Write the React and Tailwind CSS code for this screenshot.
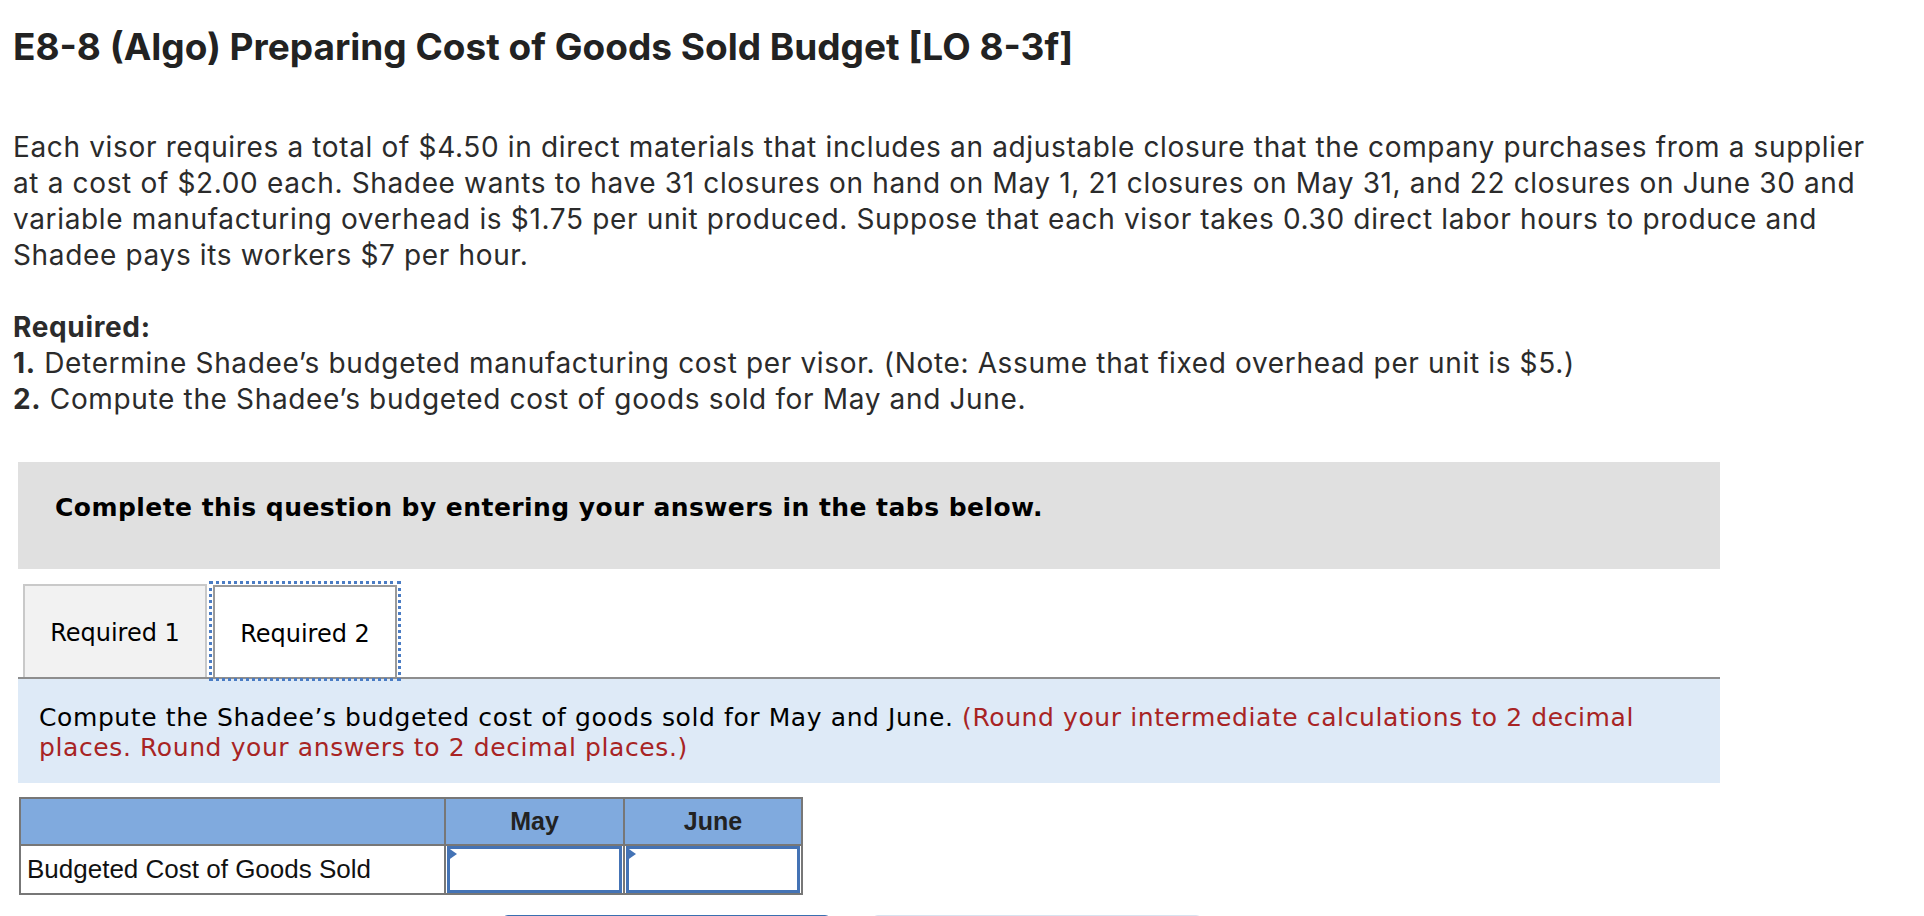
const bodyFont = { fontFamily: 'Inter, Lato, sans-serif' };

const paragraph = [
  'Each visor requires a total of $4.50 in direct materials that includes an adjustable closure that the company purchases from a supplier',
  'at a cost of $2.00 each. Shadee wants to have 31 closures on hand on May 1, 21 closures on May 31, and 22 closures on June 30 and',
  'variable manufacturing overhead is $1.75 per unit produced. Suppose that each visor takes 0.30 direct labor hours to produce and',
  'Shadee pays its workers $7 per hour.',
];

const InputCell = () => (
  <td className="border-2 border-[#777777] p-0 h-[49px]">
    <div className="relative h-full mx-[1px] border-[3px] border-[#4473b5] bg-white">
      <span className="absolute -left-[3px] -top-[2px] w-0 h-0 border-y-[7px] border-y-transparent border-l-[10px] border-l-[#4473b5]" />
    </div>
  </td>
);

const App = () => {
  return (
    <div className="min-h-[916px] bg-white text-[#2b2b2b]">
      <div className="pl-[13px]" style={bodyFont}>
        <h1 className="mt-[24px] text-[37px] leading-[46px] font-bold text-[#222222]">
          E8-8 (Algo) Preparing Cost of Goods Sold Budget [LO 8-3f]
        </h1>

        <div className="mt-[59px] text-[28px] leading-[36px] tracking-[0.65px]">
          {paragraph.map((line) => (
            <div key={line} className="whitespace-nowrap">{line}</div>
          ))}
        </div>

        <div className="mt-[36px] text-[28px] leading-[36px] tracking-[0.65px]">
          <div className="font-bold">Required:</div>
          <div><span className="font-bold">1.</span> Determine Shadee’s budgeted manufacturing cost per visor. (Note: Assume that fixed overhead per unit is $5.)</div>
          <div><span className="font-bold">2.</span> Compute the Shadee’s budgeted cost of goods sold for May and June.</div>
        </div>
      </div>

      <div className="ml-[18px] w-[1702px]" style={{ fontFamily: '"DejaVu Sans", Verdana, sans-serif' }}>
        <div className="mt-[45px] h-[107px] bg-[#e0e0e0] pl-[37px] pt-[34px]">
          <p className="text-[25px] leading-[24px] tracking-[0.45px] font-bold text-black">
            Complete this question by entering your answers in the tabs below.
          </p>
        </div>

        <div className="mt-[15px] flex items-end gap-[6px] pl-[5px] border-b-2 border-[#8e8e8e]">
          <button className="w-[184px] h-[93px] flex items-center justify-center pt-[3px] bg-[#f2f2f2] border-2 border-b-0 border-[#c9c9c9] text-[24px] text-black">
            Required 1
          </button>
          <button className="w-[184px] h-[92px] flex items-center justify-center pt-[3px] bg-white border-2 border-b-0 border-[#9a9a9a] text-[24px] text-black outline-dotted outline-[3px] outline-offset-[1px] outline-[#4a7cc4]">
            Required 2
          </button>
        </div>

        <div className="h-[104px] bg-[#deeaf7] pl-[21px] pt-[24px] text-[25px] leading-[30px] tracking-[0.6px] text-black">
          Compute the Shadee’s budgeted cost of goods sold for May and June.{' '}
          <span className="text-[#a82424]">(Round your intermediate calculations to 2 decimal<br />places. Round your answers to 2 decimal places.)</span>
        </div>

        <table
          className="mt-[14px] ml-[1px] border-collapse"
          style={{ fontFamily: '"Liberation Sans", Arial, sans-serif' }}
        >
          <thead>
            <tr className="bg-[#80aade] h-[47px]">
              <th className="w-[425px] border-2 border-[#777777]" />
              <th className="w-[179px] border-2 border-[#777777] text-[25px] font-bold text-[#222222]">May</th>
              <th className="w-[178px] border-2 border-[#777777] text-[25px] font-bold text-[#222222]">June</th>
            </tr>
          </thead>
          <tbody>
            <tr>
              <td className="border-2 border-[#777777] pl-[6px] text-left text-[26px] text-[#111111] h-[49px]">Budgeted Cost of Goods Sold</td>
              <InputCell />
              <InputCell />
            </tr>
          </tbody>
        </table>

        <div className="mt-[20px] flex gap-[41px] pl-[484px]">
          <div className="w-[329px] h-[40px] rounded-t-[6px] bg-[#3a6fb0]" />
          <div className="w-[330px] h-[40px] rounded-t-[6px] bg-[#d8e3f0]" />
        </div>
      </div>
    </div>
  );
};

export default App;
